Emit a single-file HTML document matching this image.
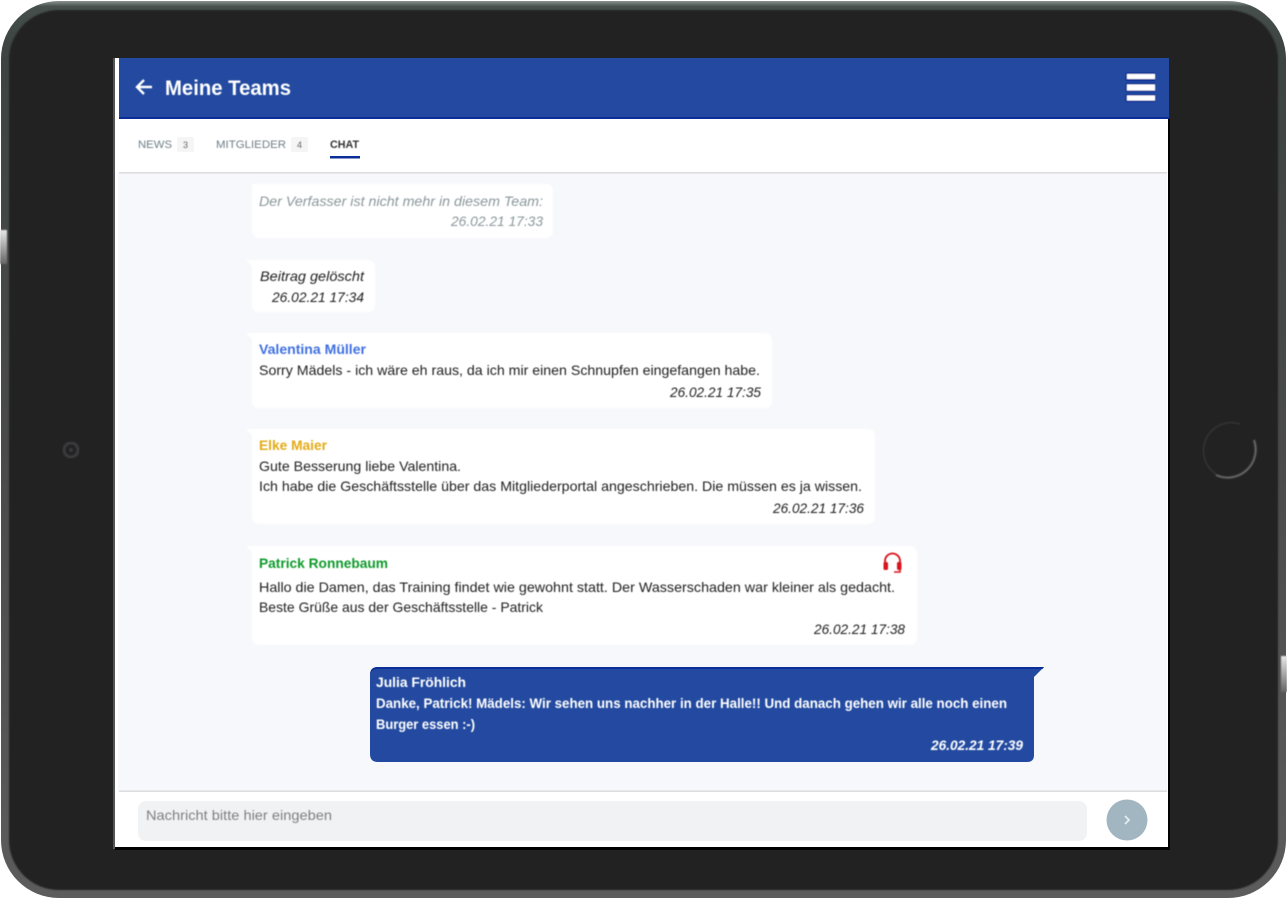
<!DOCTYPE html>
<html lang="de"><head><meta charset="utf-8"><title>Meine Teams</title>
<style>
html,body{margin:0;padding:0;background:#fff;width:1287px;height:900px;overflow:hidden}
svg{display:block;font-family:"Liberation Sans",sans-serif}
text{white-space:pre}
</style></head><body>
<svg width="1287" height="900" viewBox="0 0 1287 900" xmlns="http://www.w3.org/2000/svg">
<defs>
<linearGradient id="edge" x1="0" y1="0" x2="0" y2="1">
<stop offset="0" stop-color="#8b938f"/><stop offset="0.006" stop-color="#47504d"/><stop offset="0.05" stop-color="#3d4442"/><stop offset="0.5" stop-color="#4a4a4a"/><stop offset="1" stop-color="#5c5c5c"/>
</linearGradient>
<linearGradient id="btn" x1="0" y1="0" x2="0" y2="1"><stop offset="0" stop-color="#e8e8e8"/><stop offset="1" stop-color="#666"/></linearGradient>
<filter id="b" x="-5%" y="-5%" width="110%" height="110%"><feGaussianBlur stdDeviation="0.6"/></filter>
<filter id="s" x="-10%" y="-10%" width="120%" height="120%"><feGaussianBlur stdDeviation="0.8"/></filter>
</defs>
<rect x="1" y="1" width="1285" height="897" rx="58" fill="url(#edge)"/>
<rect x="9" y="10" width="1269" height="880" rx="50" fill="#232323" filter="url(#s)"/>
<rect x="0" y="230" width="7" height="34" fill="url(#btn)" filter="url(#s)"/>
<rect x="1281" y="656" width="6" height="36" fill="url(#btn)" filter="url(#s)"/>
<circle cx="71" cy="450" r="7" fill="none" stroke="#3a3a3d" stroke-width="3" filter="url(#s)"/>
<circle cx="71" cy="450" r="2" fill="#3a3a3d" filter="url(#s)"/>
<g filter="url(#s)" fill="none">
<path d="M1216 474A28 28 0 0 1 1240 424" stroke="#343434" stroke-width="1.500"/>
<path d="M1254 440A28 28 0 0 1 1216 475" stroke="#6a6a6a" stroke-width="2"/>
</g>
<rect x="113" y="58" width="2" height="791" fill="#555"/>
<rect x="115" y="847" width="1055" height="3" fill="#000"/>
<rect x="1168" y="119" width="2" height="731" fill="#000"/>
<rect x="115" y="58" width="1053" height="789" fill="#fff"/>
<rect x="118" y="173" width="1049" height="618" fill="#f7f8fb"/>
<rect x="119" y="58" width="1050" height="61" fill="#234aa0"/>
<rect x="119" y="117" width="1050" height="2" fill="#0b2e98"/>
<rect x="119" y="172" width="1048" height="1.500" fill="#dcdcdc"/>
<rect x="119" y="790.500" width="1048" height="1.500" fill="#dcdcdc"/>
<g filter="url(#b)">
<path d="M137 87H152M144 80L137 87L144 94" fill="none" stroke="#fff" stroke-width="2.400"/>
<text x="165" y="95" font-size="21" font-weight="700" fill="#fff" textLength="126" lengthAdjust="spacingAndGlyphs">Meine Teams</text>
<rect x="1125.500" y="72.500" width="30" height="8.500" rx="2" fill="#0c2f98"/>
<rect x="1125.500" y="83" width="30" height="9" rx="2" fill="#0c2f98"/>
<rect x="1125.500" y="94" width="30" height="8" rx="2" fill="#0c2f98"/>
<rect x="1127" y="74" width="28" height="5" fill="#fff"/>
<rect x="1127" y="84.500" width="28" height="6" fill="#fff"/>
<rect x="1127" y="95.500" width="28" height="5" fill="#fff"/>
</g>
<g fill="#fff" filter="url(#s)">
<path d="M252 184H545Q553 184 553 192V230Q553 238 545 238H260Q252 238 252 230Z"/>
<path d="M246 260H367Q375 260 375 268V304Q375 312 367 312H260Q252 312 252 304V266Z"/>
<path d="M246 333H764Q772 333 772 341V400Q772 408 764 408H260Q252 408 252 400V339Z"/>
<path d="M246 429H867Q875 429 875 437V516Q875 524 867 524H260Q252 524 252 516V435Z"/>
<path d="M246 546H909Q917 546 917 554V637Q917 645 909 645H260Q252 645 252 637V552Z"/>
</g>
<path d="M378 667H1044L1034 677V755Q1034 762 1027 762H378Q370 762 370 754V675Q370 667 378 667Z" fill="#234aa0"/>
<path d="M378 667H1044L1042.500 669H378Q371 669 370 675Q370 667 378 667Z" fill="#0b2e98"/>
<rect x="138" y="801" width="949" height="40" rx="8" fill="#f1f2f4"/>
<circle cx="1127" cy="820" r="20.500" fill="#a1b6c1"/>
<path d="M1125 816L1129 820L1125 824" fill="none" stroke="#e4ecf0" stroke-width="1.800"/>
<rect x="177" y="137" width="17" height="15" rx="2" fill="#f5f5f5"/>
<rect x="291" y="137" width="17" height="15" rx="2" fill="#f5f5f5"/>
<rect x="330" y="156" width="30" height="2.500" fill="#0b2e98"/>
<g filter="url(#b)" font-size="14" fill="#222">
<text x="138" y="148" font-size="11" fill="#6f7f87" textLength="34" lengthAdjust="spacingAndGlyphs">NEWS</text>
<text x="183" y="148" font-size="9" fill="#666">3</text>
<text x="216" y="148" font-size="11" fill="#6f7f87" textLength="70" lengthAdjust="spacingAndGlyphs">MITGLIEDER</text>
<text x="297" y="148" font-size="9" fill="#666">4</text>
<text x="330" y="148" font-size="11" fill="#333" font-weight="700" textLength="29" lengthAdjust="spacingAndGlyphs">CHAT</text>
<g font-style="italic" fill="#8a979a">
<text x="259" y="206" textLength="284" lengthAdjust="spacingAndGlyphs">Der Verfasser ist nicht mehr in diesem Team:</text>
<text x="451" y="226" textLength="92" lengthAdjust="spacingAndGlyphs">26.02.21 17:33</text>
</g>
<g font-style="italic" fill="#222">
<text x="260" y="281" textLength="104" lengthAdjust="spacingAndGlyphs">Beitrag gelöscht</text>
<text x="272" y="302" textLength="92" lengthAdjust="spacingAndGlyphs">26.02.21 17:34</text>
<text x="670" y="397" textLength="91" lengthAdjust="spacingAndGlyphs">26.02.21 17:35</text>
<text x="773" y="513" textLength="91" lengthAdjust="spacingAndGlyphs">26.02.21 17:36</text>
<text x="814" y="634" textLength="91" lengthAdjust="spacingAndGlyphs">26.02.21 17:38</text>
</g>
<text x="259" y="354" font-weight="700" fill="#3f70e0" textLength="107" lengthAdjust="spacingAndGlyphs">Valentina Müller</text>
<text x="259" y="375" textLength="501" lengthAdjust="spacingAndGlyphs">Sorry Mädels - ich wäre eh raus, da ich mir einen Schnupfen eingefangen habe.</text>
<text x="259" y="450" font-weight="700" fill="#e2aa14" textLength="68" lengthAdjust="spacingAndGlyphs">Elke Maier</text>
<text x="259" y="471" textLength="202" lengthAdjust="spacingAndGlyphs">Gute Besserung liebe Valentina.</text>
<text x="259" y="491" textLength="603" lengthAdjust="spacingAndGlyphs">Ich habe die Geschäftsstelle über das Mitgliederportal angeschrieben. Die müssen es ja wissen.</text>
<text x="259" y="568" font-weight="700" fill="#0f9a2c" textLength="129" lengthAdjust="spacingAndGlyphs">Patrick Ronnebaum</text>
<text x="259" y="592" textLength="636" lengthAdjust="spacingAndGlyphs">Hallo die Damen, das Training findet wie gewohnt statt. Der Wasserschaden war kleiner als gedacht.</text>
<text x="259" y="612" textLength="284" lengthAdjust="spacingAndGlyphs">Beste Grüße aus der Geschäftsstelle - Patrick</text>
<g fill="#fff" font-weight="700">
<text x="376" y="687" textLength="90" lengthAdjust="spacingAndGlyphs">Julia Fröhlich</text>
<text x="376" y="708" textLength="631" lengthAdjust="spacingAndGlyphs">Danke, Patrick! Mädels: Wir sehen uns nachher in der Halle!! Und danach gehen wir alle noch einen</text>
<text x="376" y="729" textLength="99" lengthAdjust="spacingAndGlyphs">Burger essen :-)</text>
<text x="931" y="750" font-style="italic" textLength="92" lengthAdjust="spacingAndGlyphs">26.02.21 17:39</text>
</g>
<text x="146" y="820" fill="#7d8184" textLength="186" lengthAdjust="spacingAndGlyphs">Nachricht bitte hier eingeben</text>
<path d="M885 566V561A7.500 7.500 0 0 1 900 561V566" fill="none" stroke="#d8121f" stroke-width="1.800"/>
<rect x="883.500" y="562" width="4.500" height="8" rx="1.500" fill="#d8121f"/>
<rect x="897" y="562" width="4.500" height="8" rx="1.500" fill="#d8121f"/>
<path d="M900 569V572H894" fill="none" stroke="#d8121f" stroke-width="1.500"/>
</g>
</svg>
</body></html>
